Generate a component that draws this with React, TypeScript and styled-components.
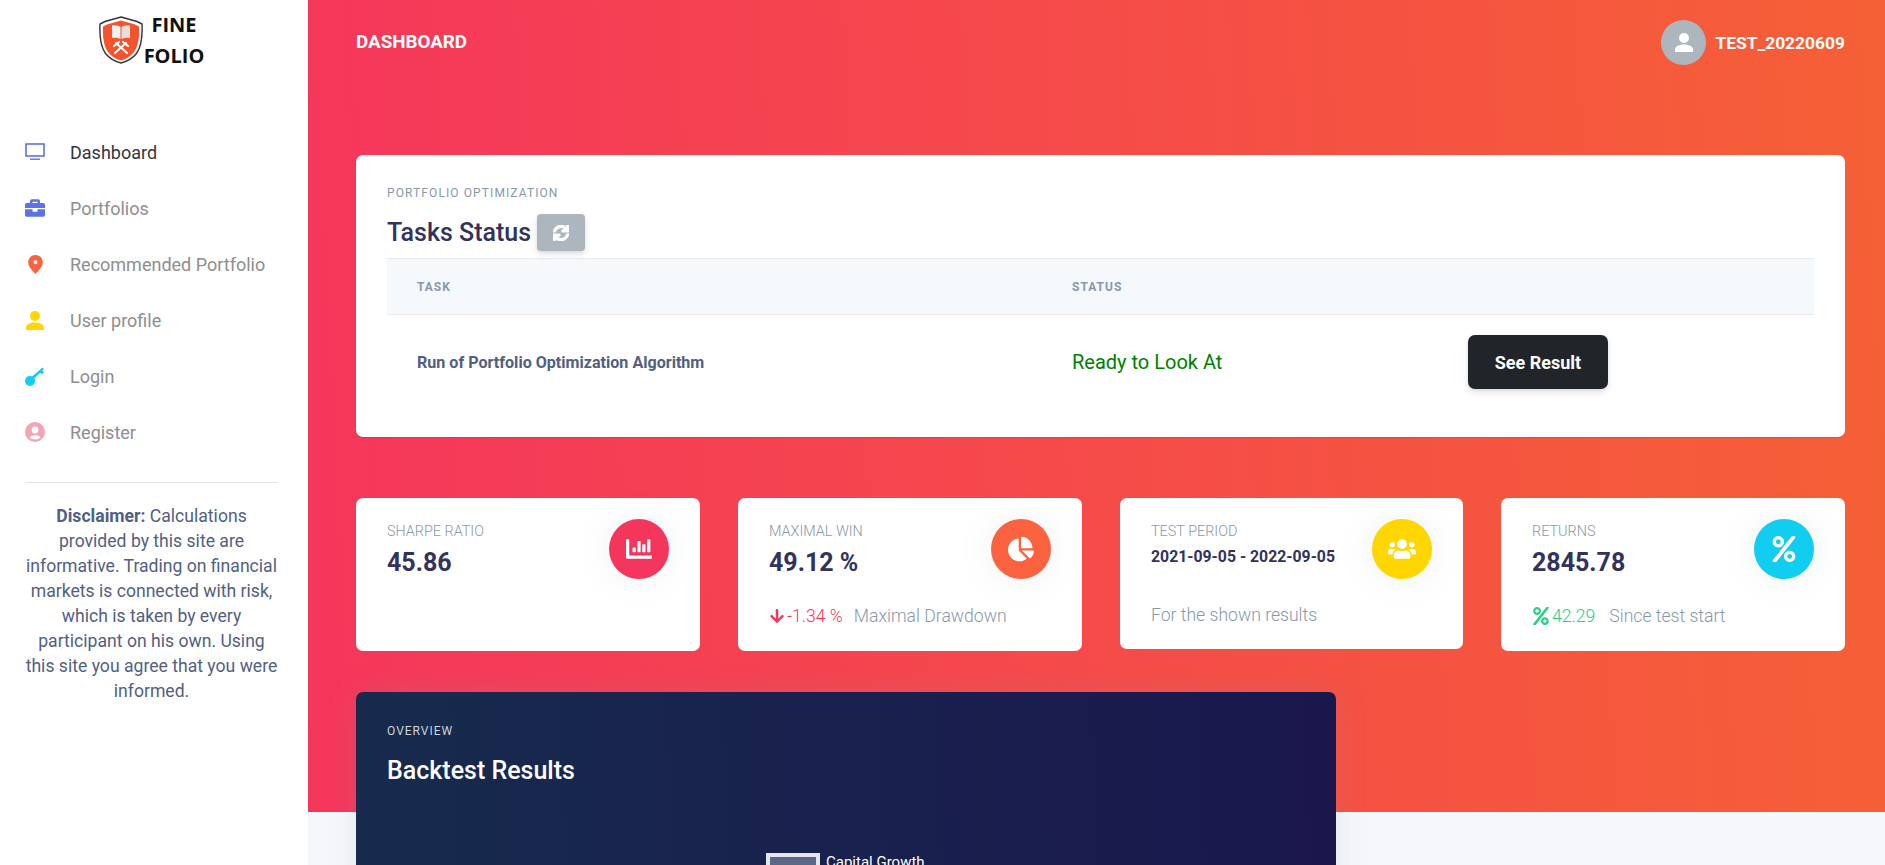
import React, { FC, ReactNode } from 'react'
import styled, { createGlobalStyle } from 'styled-components'
import {
  FaArrowDown,
  FaBriefcase,
  FaChartBar,
  FaChartPie,
  FaPercent,
  FaSync,
  FaUsers,
} from 'react-icons/fa'

const GlobalStyle = createGlobalStyle`
  html, body {
    margin: 0;
    height: 100%;
    overflow: hidden;
  }
  body {
    font-family: Roboto, "Liberation Sans", sans-serif;
    background: #f5f7fb;
  }
  * {
    box-sizing: border-box;
  }
`

const MonitorIcon = () => (
  <svg width="20" height="18" viewBox="0 0 20 18">
    <rect x="1" y="1" width="18" height="12" fill="none" stroke="currentColor" strokeWidth="1.6" />
    <rect x="5" y="15.5" width="10" height="1.4" fill="currentColor" />
  </svg>
)

const PinIcon = () => (
  <svg width="15" height="19" viewBox="0 0 15 19">
    <path
      fillRule="evenodd"
      fill="currentColor"
      d="M7.5 0C3.4 0 .2 3.2.2 7.2c0 4.6 5.2 9.6 7.3 11.8 2.1-2.2 7.3-7.2 7.3-11.8C14.800 3.200 11.600 0 7.500 0zM7.500 5.200a2 2 0 1 1 0 4 2 2 0 0 1 0-4z"
    />
  </svg>
)

const PersonIcon = () => (
  <svg width="18" height="19" viewBox="0 0 18 19">
    <circle cx="9" cy="5" r="5" fill="currentColor" />
    <path fill="currentColor" d="M0 19v-2.500C0 13.500 4 11.500 9 11.500s9 2 9 5V19z" />
  </svg>
)

const KeyIcon = () => (
  <svg width="20" height="19" viewBox="0 0 20 19">
    <circle cx="5" cy="14" r="5" fill="currentColor" />
    <path fill="currentColor" d="M6.500 10 17.500 .500l1.500 1.500-1.700 1.800 1.700 1.400-2 2-1.700-1.400-6.500 6.200z" />
  </svg>
)

const CircleUserIcon = () => (
  <svg width="20" height="20" viewBox="0 0 20 20">
    <circle cx="10" cy="10" r="10" fill="currentColor" />
    <circle cx="10" cy="8" r="3.400" fill="#fff" />
    <path fill="#fff" d="M4.500 15.500c.8-1.700 3-2.500 5.500-2.500s4.700.8 5.500 2.500c-1.400 1.300-3.400 2-5.500 2s-4.100-.7-5.500-2z" />
  </svg>
)

const ShieldLogo = () => (
  <svg width="44" height="48" viewBox="0 0 44 48">
    <path
      fill="#fff"
      stroke="#333"
      strokeWidth="1.400"
      d="M22 1 38 5.500 43 8c.6 12-.2 22-5.500 29.500C33.500 42.500 28 45.500 22 47c-6-1.500-11.500-4.500-15.500-9.500C1.200 30 .4 20 1 8l5-2.500z"
    />
    <path
      fill="#f4532d"
      d="M22 4.500 36 8.500 40 10.500c.4 10-.5 19-5 25.500-3.300 4.500-8 7.300-13 8.500-5-1.200-9.700-4-13-8.500C4.500 29.500 3.600 20.500 4 10.500L8 8.500z"
    />
    <path fill="#f3f1ee" d="M13 9.500c3.500-.6 7 .2 8.500 1.500v12c-2-1-5.500-1.500-8.500-1z" />
    <path fill="#e3e0dc" d="M31 9.500c-3.500-.6-7 .2-8.500 1.500v12c2-1 5.500-1.500 8.500-1z" />
    <path stroke="#fff" strokeWidth="2" strokeLinecap="round" d="M16 37 27 27M28 37 17 27" />
    <path stroke="#fff" strokeWidth="2.200" strokeLinecap="round" d="M24 26l5 4M20 26l-5 4" />
  </svg>
)

type NavItem = {
  label: string
  color: string
  icon: ReactNode
  active?: boolean
}

const navItems: NavItem[] = [
  { label: 'Dashboard', color: '#5e72e4', icon: <MonitorIcon />, active: true },
  { label: 'Portfolios', color: '#5e72e4', icon: <FaBriefcase size={20} /> },
  { label: 'Recommended Portfolio', color: '#fb6340', icon: <PinIcon /> },
  { label: 'User profile', color: '#ffd600', icon: <PersonIcon /> },
  { label: 'Login', color: '#11cdef', icon: <KeyIcon /> },
  { label: 'Register', color: '#f3a4b5', icon: <CircleUserIcon /> },
]

type StatCardTypes = {
  label: string
  value: string
  small?: boolean
  short?: boolean
  iconBg: string
  icon: ReactNode
  children?: ReactNode
}

const StatCard: FC<StatCardTypes> = ({ label, value, small, short, iconBg, icon, children }) => (
  <StatCardStyles $short={short}>
    <StatTop>
      <div>
        <StatLabel>{label}</StatLabel>
        <StatValue $small={small}>{value}</StatValue>
      </div>
      <StatIcon $bg={iconBg}>{icon}</StatIcon>
    </StatTop>
    {children}
  </StatCardStyles>
)

const App = () => {
  return (
    <>
      <GlobalStyle />
      <Page>
        <Sidebar>
          <Logo>
            <ShieldLogo />
            <LogoText>
              <span>FINE</span>
              <span>FOLIO</span>
            </LogoText>
          </Logo>
          <NavList>
            {navItems.map((item) => (
              <NavRow key={item.label} $active={item.active}>
                <NavIcon $color={item.color}>{item.icon}</NavIcon>
                {item.label}
              </NavRow>
            ))}
          </NavList>
          <SideDivider />
          <Disclaimer>
            <strong>Disclaimer:</strong> Calculations provided by this site are informative. Trading on
            financial markets is connected with risk, which is taken by every participant on his own. Using
            this site you agree that you were informed.
          </Disclaimer>
        </Sidebar>

        <Main>
          <TopBar>
            <PageTitle>Dashboard</PageTitle>
            <UserBlock>
              <Avatar>
                <PersonIcon />
              </Avatar>
              TEST_20220609
            </UserBlock>
          </TopBar>

          <TasksCard>
            <Eyebrow>Portfolio Optimization</Eyebrow>
            <TasksTitle>
              Tasks Status
              <RefreshButton>
                <FaSync size={16} />
              </RefreshButton>
            </TasksTitle>
            <TableHead>
              <span>Task</span>
              <span>Status</span>
            </TableHead>
            <TableRow>
              <TaskName>Run of Portfolio Optimization Algorithm</TaskName>
              <TaskStatus>Ready to Look At</TaskStatus>
              <ResultButton>See Result</ResultButton>
            </TableRow>
          </TasksCard>

          <StatsGrid>
            <StatCard label="Sharpe Ratio" value="45.86" iconBg="#f5365c" icon={<FaChartBar size={26} />} />
            <StatCard label="Maximal Win" value="49.12 %" iconBg="#fb6340" icon={<FaChartPie size={26} />}>
              <StatFooter>
                <Delta $color="#f5365c" $after={11}>
                  <FaArrowDown size={16} />
                  -1.34 %
                </Delta>
                Maximal Drawdown
              </StatFooter>
            </StatCard>
            <StatCard
              label="Test Period"
              value="2021-09-05 - 2022-09-05"
              small
              short
              iconBg="#ffd600"
              icon={<FaUsers size={28} />}
            >
              <StatFooter $tight>For the shown results</StatFooter>
            </StatCard>
            <StatCard label="Returns" value="2845.78" iconBg="#11cdef" icon={<FaPercent size={26} />}>
              <StatFooter>
                <Delta $color="#2dce89" $after={14}>
                  <FaPercent size={18} />
                  42.29
                </Delta>
                Since test start
              </StatFooter>
            </StatCard>
          </StatsGrid>

          <BacktestCard>
            <DarkEyebrow>Overview</DarkEyebrow>
            <DarkTitle>Backtest Results</DarkTitle>
            <Legend>
              <LegendSwatch />
              Capital Growth
            </Legend>
          </BacktestCard>
        </Main>
      </Page>
    </>
  )
}

const Page = styled.div`
  display: flex;
  height: 865px;
  overflow: hidden;
`
const Sidebar = styled.aside`
  flex: 0 0 308px;
  background: #fff;
  display: flex;
  flex-direction: column;
`
const Logo = styled.div`
  display: flex;
  align-items: center;
  justify-content: center;
  gap: 1px;
  height: 72px;
  padding: 8px 5px 0 0;
`
const LogoText = styled.div`
  display: flex;
  flex-direction: column;
  align-items: center;
  font-family: 'Open Sans', sans-serif;
  font-weight: 700;
  font-size: 20px;
  line-height: 31px;
  color: #111;
`
const NavList = styled.nav`
  display: flex;
  flex-direction: column;
  margin-top: 52px;
`
const NavRow = styled.div<{ $active?: boolean }>`
  display: flex;
  align-items: center;
  height: 56px;
  padding-left: 25px;
  font-size: 18px;
  color: ${(p) => (p.$active ? '#32363b' : '#8e8e8e')};
`
const NavIcon = styled.span<{ $color: string }>`
  display: flex;
  align-items: center;
  justify-content: center;
  width: 20px;
  margin-right: 25px;
  color: ${(p) => p.$color};
`
const SideDivider = styled.hr`
  width: 253px;
  margin: 22px 0 21px 25px;
  border: 0;
  border-top: 1px solid #e2e4e8;
`
const Disclaimer = styled.p`
  width: 253px;
  margin: 0 0 0 25px;
  font-size: 17.6px;
  line-height: 25px;
  font-weight: 400;
  text-align: center;
  color: #525f7f;
  strong {
    font-weight: 700;
  }
`
const Main = styled.main`
  flex: 1;
  min-width: 0;
  padding: 0 40px 0 48px;
  background: linear-gradient(87deg, #f5365c 0, #f56036 100%) no-repeat;
  background-size: 100% 812px;
`
const TopBar = styled.header`
  display: flex;
  align-items: center;
  justify-content: space-between;
  height: 83px;
  margin-bottom: 72px;
  color: #fff;
`
const PageTitle = styled.h1`
  margin: 0;
  font-size: 18.8px;
  font-weight: 700;
  text-transform: uppercase;
`
const UserBlock = styled.div`
  display: flex;
  align-items: center;
  gap: 9px;
  padding-top: 2px;
  font-size: 17.4px;
  font-weight: 700;
`
const Avatar = styled.span`
  display: flex;
  align-items: center;
  justify-content: center;
  width: 45px;
  height: 45px;
  border-radius: 50%;
  background: #adb5bd;
  color: #fff;
`
const TasksCard = styled.section`
  height: 282px;
  padding: 32px 31px 0;
  background: #fff;
  border-radius: 7px;
  box-shadow: 0 1px 1px rgba(0, 0, 0, 0.1);
`
const Eyebrow = styled.div`
  font-size: 12px;
  line-height: 12px;
  margin-bottom: 15px;
  letter-spacing: 1.1px;
  text-transform: uppercase;
  color: #8898aa;
`
const TasksTitle = styled.h3`
  display: flex;
  align-items: center;
  gap: 6px;
  margin: 0;
  font-size: 25px;
  font-weight: 500;
  color: #32325d;
`
const RefreshButton = styled.button`
  display: flex;
  align-items: center;
  justify-content: center;
  width: 48px;
  height: 37px;
  border: 0;
  border-radius: 4px;
  background: #adb5bd;
  color: #fff;
  box-shadow: 0 4px 6px rgba(50, 50, 93, 0.11), 0 1px 3px rgba(0, 0, 0, 0.08);
  svg {
    stroke: #fff;
    stroke-width: 36;
  }
`
const TableHead = styled.div`
  display: grid;
  grid-template-columns: 655px 1fr;
  align-items: center;
  height: 57px;
  margin-top: 7px;
  padding-left: 30px;
  background: #f6f9fc;
  border-top: 1px solid #e9ecef;
  border-bottom: 1px solid #e9ecef;
  font-size: 12px;
  font-weight: 700;
  letter-spacing: 1px;
  text-transform: uppercase;
  color: #8898aa;
`
const TableRow = styled.div`
  display: grid;
  grid-template-columns: 655px 396px auto;
  justify-content: start;
  align-items: center;
  height: 94px;
  padding-left: 30px;
`
const TaskName = styled.span`
  font-size: 16.1px;
  font-weight: 700;
  color: #525f7f;
`
const TaskStatus = styled.span`
  font-size: 20px;
  color: green;
`
const ResultButton = styled.button`
  width: 140px;
  height: 54px;
  border: 0;
  border-radius: 7px;
  background: #212529;
  color: #fff;
  font-family: inherit;
  font-size: 18px;
  font-weight: 700;
  box-shadow: 0 4px 6px rgba(50, 50, 93, 0.11), 0 1px 3px rgba(0, 0, 0, 0.08);
`
const StatsGrid = styled.div`
  display: grid;
  grid-template-columns: 344px 344px 343px 344px;
  column-gap: 38px;
  align-items: start;
  margin-top: 61px;
`
const StatCardStyles = styled.div<{ $short?: boolean }>`
  display: flex;
  flex-direction: column;
  height: ${(p) => (p.$short ? '151px' : '153px')};
  padding: 21px 31px 0;
  background: #fff;
  border-radius: 7px;
`
const StatTop = styled.div`
  display: flex;
  justify-content: space-between;
  align-items: flex-start;
  height: 81px;
`
const StatLabel = styled.div`
  margin-top: 5px;
  font-size: 14.4px;
  line-height: 16px;
  font-weight: 300;
  text-transform: uppercase;
  color: #8898aa;
`
const StatValue = styled.div<{ $small?: boolean }>`
  margin-top: ${(p) => (p.$small ? '7px' : '8px')};
  font-size: ${(p) => (p.$small ? '15.8px' : '25px')};
  line-height: ${(p) => (p.$small ? '20px' : '30px')};
  font-weight: 700;
  color: #32325d;
`
const StatIcon = styled.div<{ $bg: string }>`
  flex: 0 0 60px;
  display: flex;
  align-items: center;
  justify-content: center;
  width: 60px;
  height: 60px;
  border-radius: 50%;
  background: ${(p) => p.$bg};
  color: #fff;
  box-shadow: 0 0 32px rgba(136, 152, 170, 0.15);
`
const StatFooter = styled.div<{ $tight?: boolean }>`
  display: flex;
  align-items: center;
  margin-top: ${(p) => (p.$tight ? '5px' : '6px')};
  font-size: 17.6px;
  font-weight: 300;
  color: #8898aa;
`
const Delta = styled.span<{ $color: string; $after: number }>`
  display: inline-flex;
  align-items: center;
  gap: 2px;
  margin-right: ${(p) => p.$after}px;
  color: ${(p) => p.$color};
`
const BacktestCard = styled.section`
  width: 980px;
  height: 400px;
  margin-top: 41px;
  padding: 33px 31px 0;
  border-radius: 7px;
  background: linear-gradient(87deg, #172b4d 0, #1a174d 100%);
  box-shadow: 0 0 32px rgba(136, 152, 170, 0.15);
`
const DarkEyebrow = styled.div`
  font-size: 12px;
  line-height: 12px;
  letter-spacing: 1px;
  text-transform: uppercase;
  color: #ced4da;
`
const DarkTitle = styled.h3`
  margin: 18px 0 0;
  font-size: 25px;
  line-height: 32px;
  font-weight: 500;
  color: #fff;
`
const Legend = styled.div`
  display: flex;
  align-items: flex-start;
  gap: 6px;
  margin: 66px 0 0 379px;
  font-size: 15px;
  line-height: 18px;
  color: #fff;
`
const LegendSwatch = styled.span`
  width: 54px;
  height: 20px;
  border: 4px solid #e6e6ea;
  background: #5a6785;
`

export default App
